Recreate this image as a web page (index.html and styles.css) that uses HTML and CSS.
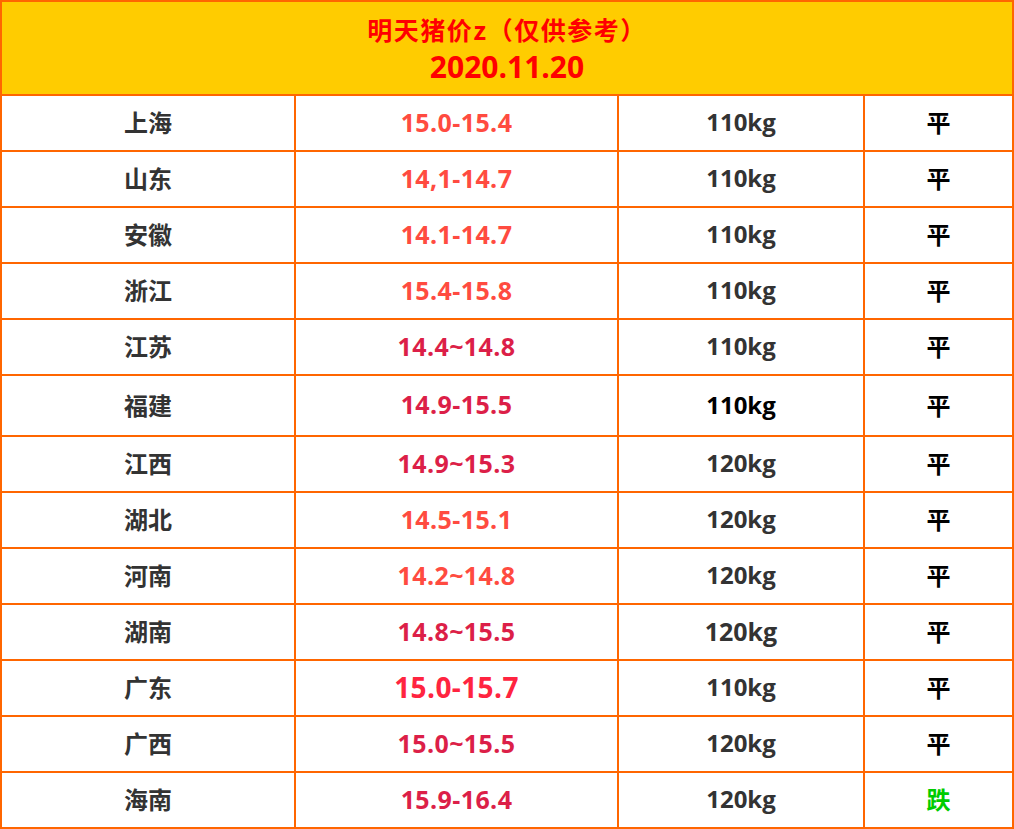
FILE: index.html
```html
<!DOCTYPE html>
<html lang="zh-CN">
<head>
<meta charset="utf-8">
<title>明天猪价</title>
<link rel="stylesheet" href="styles.css">
</head>
<body>
<div class="sheet">
  <div class="cell head">
    <div class="title">明天猪价z（仅供参考）</div>
    <div class="date">2020.11.20</div>
  </div>

  <div class="cell name">上海</div><div class="cell price p-orange">15.0-15.4</div><div class="cell weight">110kg</div><div class="cell trend">平</div>
  <div class="cell name">山东</div><div class="cell price p-orange">14,1-14.7</div><div class="cell weight">110kg</div><div class="cell trend">平</div>
  <div class="cell name">安徽</div><div class="cell price p-orange">14.1-14.7</div><div class="cell weight">110kg</div><div class="cell trend">平</div>
  <div class="cell name">浙江</div><div class="cell price p-orange">15.4-15.8</div><div class="cell weight">110kg</div><div class="cell trend">平</div>
  <div class="cell name">江苏</div><div class="cell price p-crimson">14.4~14.8</div><div class="cell weight">110kg</div><div class="cell trend">平</div>
  <div class="cell name">福建</div><div class="cell price p-crimson">14.9-15.5</div><div class="cell weight w-black">110kg</div><div class="cell trend">平</div>
  <div class="cell name">江西</div><div class="cell price p-crimson">14.9~15.3</div><div class="cell weight">120kg</div><div class="cell trend">平</div>
  <div class="cell name">湖北</div><div class="cell price p-orange">14.5-15.1</div><div class="cell weight">120kg</div><div class="cell trend">平</div>
  <div class="cell name">河南</div><div class="cell price p-orange">14.2~14.8</div><div class="cell weight">120kg</div><div class="cell trend">平</div>
  <div class="cell name">湖南</div><div class="cell price p-crimson">14.8~15.5</div><div class="cell weight w-big">120kg</div><div class="cell trend">平</div>
  <div class="cell name">广东</div><div class="cell price p-red p-big">15.0-15.7</div><div class="cell weight">110kg</div><div class="cell trend">平</div>
  <div class="cell name">广西</div><div class="cell price p-crimson">15.0~15.5</div><div class="cell weight">120kg</div><div class="cell trend">平</div>
  <div class="cell name">海南</div><div class="cell price p-crimson">15.9-16.4</div><div class="cell weight">120kg</div><div class="cell trend down">跌</div>
</div>
</body>
</html>
```

FILE: styles.css
```css
* {
  box-sizing: border-box;
}

html, body {
  margin: 0;
  padding: 0;
  background: #ffffff;
}

body {
  font-family: "Open Sans", "Noto Sans CJK SC", sans-serif;
  font-weight: 700;
}

.sheet {
  width: 1014px;
  display: grid;
  grid-template-columns: 294px 323px 246px 149px;
  grid-template-rows: 94px repeat(5, 56px) 61px repeat(7, 56px);
  border-top: 2px solid #ff6600;
  border-left: 2px solid #ff6600;
}

.cell {
  border-right: 2px solid #ff6600;
  border-bottom: 2px solid #ff6600;
  display: flex;
  align-items: center;
  justify-content: center;
  font-size: 23px;
  line-height: 1;
  padding-bottom: 2px;
}

.head {
  grid-column: 1 / -1;
  background: #ffcc00;
  flex-direction: column;
  color: #ff0000;
  padding-bottom: 0;
}

.title {
  font-family: "Noto Sans CJK SC", sans-serif;
  font-size: 25px;
  line-height: 37px;
  letter-spacing: 1.5px;
}

.date {
  font-size: 30px;
  line-height: 37px;
}

.name {
  color: #333333;
  font-family: "Noto Sans CJK SC", sans-serif;
  font-size: 24px;
}

.price {
  font-size: 25px;
  letter-spacing: 0.4px;
}

.p-orange {
  color: #ff4b40;
}

.p-crimson {
  color: #dc1f48;
}

.p-red {
  color: #ff2440;
}

.p-big {
  font-size: 28px;
}

.weight {
  color: #333333;
  font-size: 24px;
}

.w-black {
  color: #000000;
}

.w-big {
  font-size: 25px;
}

.trend {
  color: #000000;
  font-family: "Noto Sans CJK SC", sans-serif;
  font-size: 24px;
}

.down {
  color: #00cc00;
}
```
